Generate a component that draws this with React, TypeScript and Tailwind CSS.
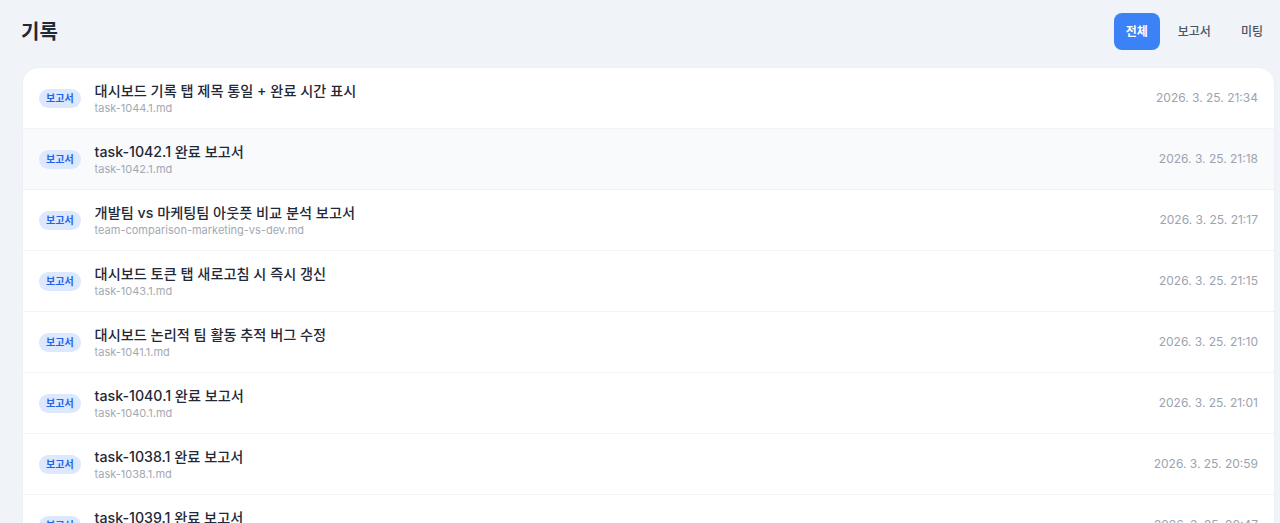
const records = [
  { title: '대시보드 기록 탭 제목 통일 + 완료 시간 표시', file: 'task-1044.1.md', time: '2026. 3. 25. 21:34' },
  { title: 'task-1042.1 완료 보고서', file: 'task-1042.1.md', time: '2026. 3. 25. 21:18', hover: true },
  { title: '개발팀 vs 마케팅팀 아웃풋 비교 분석 보고서', file: 'team-comparison-marketing-vs-dev.md', time: '2026. 3. 25. 21:17' },
  { title: '대시보드 토큰 탭 새로고침 시 즉시 갱신', file: 'task-1043.1.md', time: '2026. 3. 25. 21:15' },
  { title: '대시보드 논리적 팀 활동 추적 버그 수정', file: 'task-1041.1.md', time: '2026. 3. 25. 21:10' },
  { title: 'task-1040.1 완료 보고서', file: 'task-1040.1.md', time: '2026. 3. 25. 21:01' },
  { title: 'task-1038.1 완료 보고서', file: 'task-1038.1.md', time: '2026. 3. 25. 20:59' },
  { title: 'task-1039.1 완료 보고서', file: 'task-1039.1.md', time: '2026. 3. 25. 20:47' },
];

const tabs = ['전체', '보고서', '미팅'];

export default function App() {
  return (
    <div
      className="h-[523px] overflow-hidden bg-[#f0f3f8] text-[#1f2937]"
      style={{ fontFamily: 'Inter, "Noto Sans CJK KR", sans-serif' }}
    >
      {/* Header */}
      <header className="flex items-center justify-between pl-[21px] pr-[5px] pt-[13px]">
        <h1 className="text-xl font-bold text-[#1f2937]">기록</h1>
        <div className="flex items-center gap-1.5">
          {tabs.map((t, i) => (
            <button
              key={t}
              className={
                i === 0
                  ? 'h-[37px] rounded-lg bg-[#3b82f6] px-3 text-xs font-semibold text-white'
                  : 'h-[37px] rounded-lg px-3 text-xs font-medium text-[#4b5563]'
              }
            >
              {t}
            </button>
          ))}
        </div>
      </header>

      {/* List */}
      <div className="mt-[17px] ml-[22px] mr-[5px] overflow-hidden rounded-t-2xl border border-[#eceff4] bg-white">
        {records.map((r) => (
          <div
            key={r.file}
            className={
              'flex items-center justify-between border-b border-[#f1f3f7] px-4 py-[13px] ' +
              (r.hover ? 'bg-[#f8fafc]' : '')
            }
          >
            <div className="flex items-center gap-3.5">
              <span className="rounded-full bg-[#dbe8fe] px-[7px] py-0.5 text-[10px] font-semibold leading-[15px] text-[#2563eb]">
                보고서
              </span>
              <div>
                <div className="text-[14.2px] leading-5 font-medium text-[#1f2937]">{r.title}</div>
                <div className="text-[11px] leading-[14px] text-[#a3a9b3]">{r.file}</div>
              </div>
            </div>
            <span className="text-xs text-[#9ca3af]">{r.time}</span>
          </div>
        ))}
      </div>
    </div>
  );
}
